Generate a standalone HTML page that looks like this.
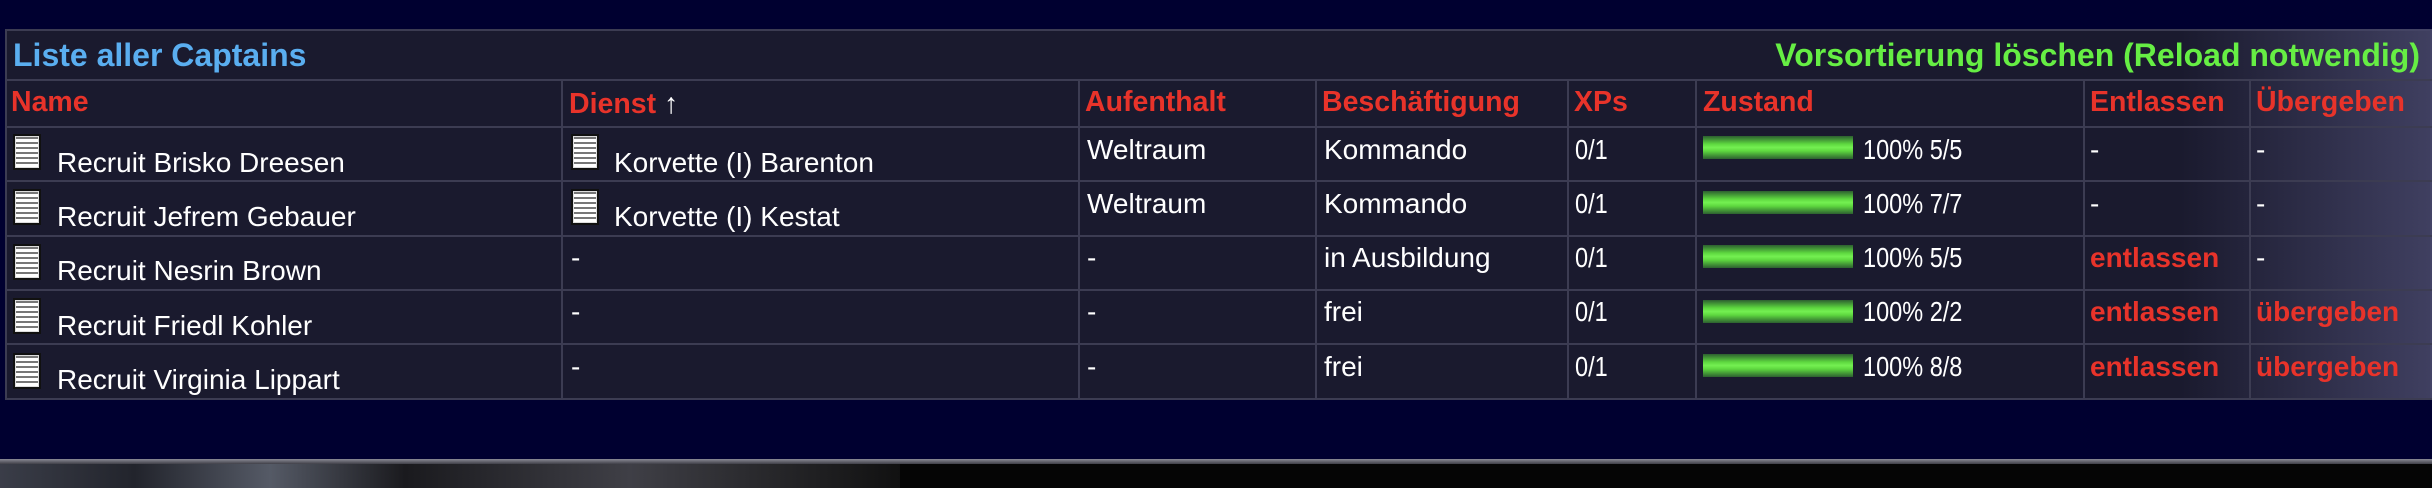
<!DOCTYPE html>
<html><head><meta charset="utf-8"><style>
*{margin:0;padding:0;box-sizing:border-box}
body{width:2432px;height:488px;overflow:hidden;background:#000030;font-family:"Liberation Sans",sans-serif;position:relative}
.tbl{position:absolute;left:5px;top:29px;width:2427px;height:371px;background:#1a1a2e;border:2px solid #3c3c52}
.grad{position:absolute;left:2180px;top:29px;width:252px;height:371px;background:linear-gradient(90deg,rgba(60,60,90,0),rgba(70,70,105,.85))}
.h{position:absolute;height:2px;background:#3c3c52;left:5px;width:2427px}
.v{position:absolute;width:2px;background:#3c3c52;top:127px;height:273px}
.t{position:absolute;font-size:28px;color:#fff;white-space:nowrap;line-height:30px}
.n{font-size:28px;transform:scaleX(.84);transform-origin:0 0}
.b{font-weight:bold}
.hd{font-size:28.5px}
.r{color:#e8332a}
.ic{position:absolute;width:28px;height:36px;background:#111;padding:2px}
.ic div{width:24px;height:32px;background:repeating-linear-gradient(0deg,#fff 0 3px,#777 3px 5px);border:1px solid #ddd}
.bar{position:absolute;left:1703px;width:150px;height:23px;background:linear-gradient(180deg,#2d6030 0%,#5ed83f 35%,#74f052 50%,#5ed83f 65%,#2d6030 100%)}
</style></head><body>
<div class="tbl"></div>
<div class="grad"></div>
<div class="h" style="top:79px"></div>
<div class="h" style="top:126px"></div>
<div class="h" style="top:180px"></div>
<div class="h" style="top:235px"></div>
<div class="h" style="top:289px"></div>
<div class="h" style="top:343px"></div>
<div class="h" style="top:398px"></div>
<div class="v" style="left:561px;top:80px;height:320px"></div>
<div class="v" style="left:1078px;top:80px;height:320px"></div>
<div class="v" style="left:1315px;top:80px;height:320px"></div>
<div class="v" style="left:1567px;top:80px;height:320px"></div>
<div class="v" style="left:1695px;top:80px;height:320px"></div>
<div class="v" style="left:2083px;top:80px;height:320px"></div>
<div class="v" style="left:2249px;top:80px;height:320px"></div>

<div class="t b" style="left:13px;top:38px;font-size:32px;line-height:34px;color:#5aaef0">Liste aller Captains</div>
<div class="t b" style="right:12px;top:38px;font-size:32px;line-height:34px;color:#66ee44">Vorsortierung löschen (Reload notwendig)</div>

<div class="t b r hd" style="left:11px;top:87px">Name</div>
<div class="t b r hd" style="left:569px;top:89px">Dienst <span style="color:#fff;font-weight:normal">↑</span></div>
<div class="t b r hd" style="left:1085px;top:87px">Aufenthalt</div>
<div class="t b r hd" style="left:1322px;top:87px">Beschäftigung</div>
<div class="t b r hd" style="left:1574px;top:87px">XPs</div>
<div class="t b r hd" style="left:1703px;top:87px">Zustand</div>
<div class="t b r hd" style="left:2090px;top:87px">Entlassen</div>
<div class="t b r hd" style="left:2256px;top:87px">Übergeben</div>

<div class="ic" style="left:13px;top:134px"><div></div></div>
<div class="t" style="left:57px;top:148px">Recruit Brisko Dreesen</div>
<div class="ic" style="left:571px;top:134px"><div></div></div>
<div class="t" style="left:614px;top:148px">Korvette (I) Barenton</div>
<div class="t" style="left:1087px;top:135px">Weltraum</div>
<div class="t" style="left:1324px;top:135px">Kommando</div>
<div class="t n" style="left:1575px;top:135px">0/1</div>
<div class="bar" style="top:136px"></div>
<div class="t n" style="left:1863px;top:135px">100% 5/5</div>
<div class="t" style="left:2090px;top:135px">-</div>
<div class="t" style="left:2256px;top:135px">-</div>

<div class="ic" style="left:13px;top:189px"><div></div></div>
<div class="t" style="left:57px;top:202px">Recruit Jefrem Gebauer</div>
<div class="ic" style="left:571px;top:189px"><div></div></div>
<div class="t" style="left:614px;top:202px">Korvette (I) Kestat</div>
<div class="t" style="left:1087px;top:189px">Weltraum</div>
<div class="t" style="left:1324px;top:189px">Kommando</div>
<div class="t n" style="left:1575px;top:189px">0/1</div>
<div class="bar" style="top:191px"></div>
<div class="t n" style="left:1863px;top:189px">100% 7/7</div>
<div class="t" style="left:2090px;top:189px">-</div>
<div class="t" style="left:2256px;top:189px">-</div>

<div class="ic" style="left:13px;top:244px"><div></div></div>
<div class="t" style="left:57px;top:256px">Recruit Nesrin Brown</div>
<div class="t" style="left:571px;top:243px">-</div>
<div class="t" style="left:1087px;top:243px">-</div>
<div class="t" style="left:1324px;top:243px">in Ausbildung</div>
<div class="t n" style="left:1575px;top:243px">0/1</div>
<div class="bar" style="top:245px"></div>
<div class="t n" style="left:1863px;top:243px">100% 5/5</div>
<div class="t b r" style="left:2090px;top:243px">entlassen</div>
<div class="t" style="left:2256px;top:243px">-</div>

<div class="ic" style="left:13px;top:298px"><div></div></div>
<div class="t" style="left:57px;top:311px">Recruit Friedl Kohler</div>
<div class="t" style="left:571px;top:297px">-</div>
<div class="t" style="left:1087px;top:297px">-</div>
<div class="t" style="left:1324px;top:297px">frei</div>
<div class="t n" style="left:1575px;top:297px">0/1</div>
<div class="bar" style="top:300px"></div>
<div class="t n" style="left:1863px;top:297px">100% 2/2</div>
<div class="t b r" style="left:2090px;top:297px">entlassen</div>
<div class="t b r" style="left:2256px;top:297px">übergeben</div>

<div class="ic" style="left:13px;top:353px"><div></div></div>
<div class="t" style="left:57px;top:365px">Recruit Virginia Lippart</div>
<div class="t" style="left:571px;top:352px">-</div>
<div class="t" style="left:1087px;top:352px">-</div>
<div class="t" style="left:1324px;top:352px">frei</div>
<div class="t n" style="left:1575px;top:352px">0/1</div>
<div class="bar" style="top:354px"></div>
<div class="t n" style="left:1863px;top:352px">100% 8/8</div>
<div class="t b r" style="left:2090px;top:352px">entlassen</div>
<div class="t b r" style="left:2256px;top:352px">übergeben</div>

<div style="position:absolute;left:0;top:459px;width:2432px;height:5px;background:linear-gradient(180deg,#8a8a95,#404048)"></div>
<div style="position:absolute;left:0;top:464px;width:2432px;height:24px;background:#050505"></div>
<div style="position:absolute;left:0;top:464px;width:900px;height:24px;background:linear-gradient(90deg,#3a3d48 0%,#22242c 15%,#555a66 30%,#1a1a1e 45%,#3f3f46 70%,#111 100%)"></div>
</body></html>
